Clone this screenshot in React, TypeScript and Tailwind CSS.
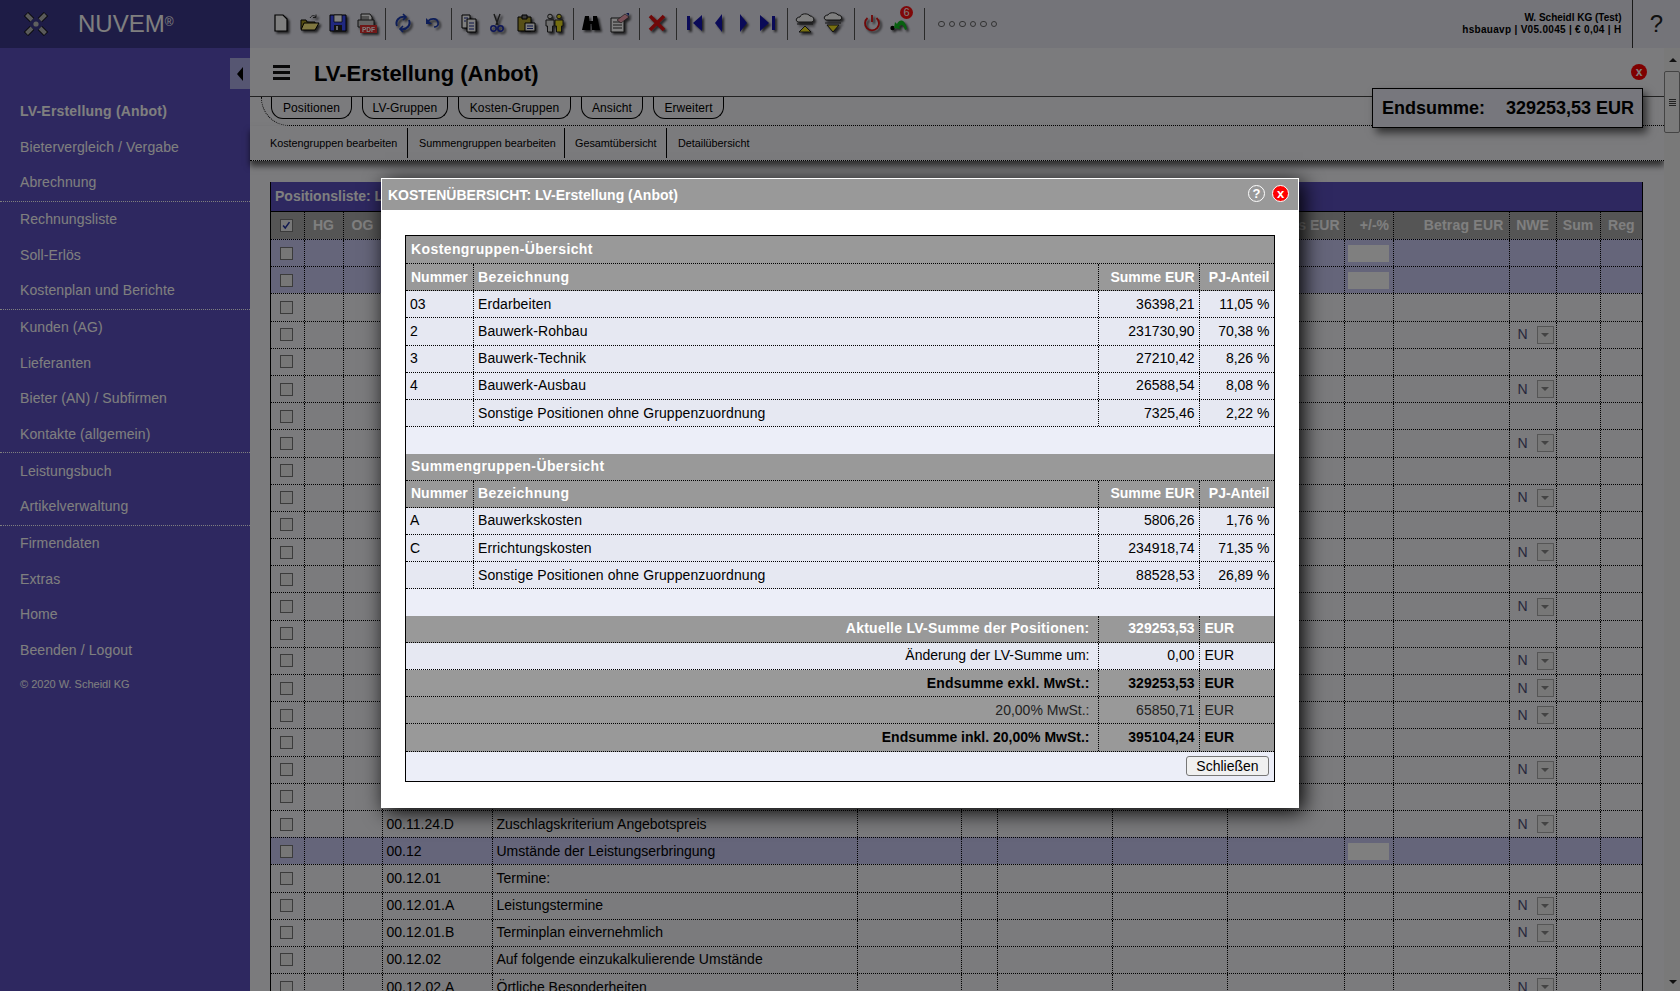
import React from 'react';

const gridCols =
  'grid-cols-[33.5px_39px_39px_110px_365px_104px_36.5px_115px_115px_116.5px_49.5px_115.5px_47px_44px_43.5px]';
const cell = 'flex h-full items-center border-r border-dotted border-black';

const menuGroups = [
  ['LV-Erstellung (Anbot)', 'Bietervergleich / Vergabe', 'Abrechnung'],
  ['Rechnungsliste', 'Soll-Erlös', 'Kostenplan und Berichte'],
  ['Kunden (AG)', 'Lieferanten', 'Bieter (AN) / Subfirmen', 'Kontakte (allgemein)'],
  ['Leistungsbuch', 'Artikelverwaltung'],
  ['Firmendaten', 'Extras', 'Home', 'Beenden / Logout'],
];

const listRows: { nr?: string; text?: string; hl?: boolean; n?: boolean }[] = [
  { hl: true }, { hl: true }, {}, { n: true }, {}, { n: true }, {}, { n: true }, {}, { n: true },
  {}, { n: true }, {}, { n: true }, {}, { n: true }, { n: true }, { n: true }, {}, { n: true }, {},
  { nr: '00.11.24.D', text: 'Zuschlagskriterium Angebotspreis', n: true },
  { nr: '00.12', text: 'Umstände der Leistungserbringung', hl: true },
  { nr: '00.12.01', text: 'Termine:' },
  { nr: '00.12.01.A', text: 'Leistungstermine', n: true },
  { nr: '00.12.01.B', text: 'Terminplan einvernehmlich', n: true },
  { nr: '00.12.02', text: 'Auf folgende einzukalkulierende Umstände' },
  { nr: '00.12.02.A', text: 'Örtliche Besonderheiten', n: true },
];

const kostenRows = [
  ['03', 'Erdarbeiten', '36398,21', '11,05 %'],
  ['2', 'Bauwerk-Rohbau', '231730,90', '70,38 %'],
  ['3', 'Bauwerk-Technik', '27210,42', '8,26 %'],
  ['4', 'Bauwerk-Ausbau', '26588,54', '8,08 %'],
  ['', 'Sonstige Positionen ohne Gruppenzuordnung', '7325,46', '2,22 %'],
];

const summenRows = [
  ['A', 'Bauwerkskosten', '5806,26', '1,76 %'],
  ['C', 'Errichtungskosten', '234918,74', '71,35 %'],
  ['', 'Sonstige Positionen ohne Gruppenzuordnung', '88528,53', '26,89 %'],
];

const Logo = () => (
  <svg width="28" height="28" viewBox="0 0 28 28">
    <g strokeLinecap="butt">
      <path d="M4 4L10 10M24 4L18 10M4 24L10 18M24 24L18 18" stroke="#111" strokeWidth="6" />
      <path d="M4.500 4.500L10 10M23.500 4.500L18 10M4.500 23.500L10 18M23.500 23.500L18 18" stroke="#b4b4b4" strokeWidth="4" />
    </g>
    <circle cx="14" cy="14" r="2.600" fill="#c0c0c0" />
  </svg>
);

const Icon = ({ children, className = 'w-[28.3px]' }: { children: React.ReactNode; className?: string }) => (
  <div className={`mb-[2px] flex shrink-0 justify-center ${className}`}>
    <svg width="22" height="22" viewBox="0 0 22 22" className="drop-shadow-[2px_2px_1px_rgba(0,0,0,0.7)]">
      {children}
    </svg>
  </div>
);

const Sep = ({ className = 'ml-[5px] mr-[3px]' }: { className?: string }) => (
  <div className={`h-[32px] w-px shrink-0 bg-[#555] ${className}`} />
);

const Toolbar = () => (
  <div className="flex h-12 shrink-0 items-center bg-[#e8e8f2] pl-[17px]">
    <Icon>
      <path d="M5 3h8l4 4v12H5z" fill="#fff" stroke="#000" strokeWidth="1.2" />
    </Icon>
    <Icon>
      <path d="M3 8h5l1 2h8v7H3z" fill="#a89a20" stroke="#000" />
      <path d="M3 18l3-7h15l-4 7z" fill="#ffef80" stroke="#000" />
      <path d="M12 6c2-3 4-3 6-1M18 2.500v3h-3" fill="none" stroke="#333" />
    </Icon>
    <Icon>
      <path d="M3 3h16v16H3z" fill="#4050ff" stroke="#000" />
      <path d="M7 3h8v7H7z" fill="#fff" stroke="#000" strokeWidth="0.7" />
      <path d="M7 13h8v6H7z" fill="#222" />
      <path d="M9 14h2v4H9z" fill="#ccc" />
    </Icon>
    <Icon>
      <path d="M6 2h9l2 3v4H6z" fill="#fff" stroke="#222" />
      <path d="M3 8h16v7H3z" fill="#c8c8c8" stroke="#222" />
      <path d="M6 5h8M6 7h8" stroke="#444" />
      <rect x="5" y="13" width="17" height="8" fill="#e03030" />
      <text x="13.500" y="19.500" fontSize="6.500" fontWeight="700" fill="#fff" textAnchor="middle" fontFamily="Liberation Sans">PDF</text>
    </Icon>
    <Sep />
    <Icon>
      <path d="M5 14c-2-5 2-10 8-9M17 8c2 5-2 10-8 9" fill="none" stroke="#1a3ab0" strokeWidth="2" />
      <path d="M11 2l3 3-3 3M11 14l-3 3 3 3" fill="none" stroke="#1a3ab0" strokeWidth="1.6" />
    </Icon>
    <Icon>
      <path d="M7 9c3-3 9-3 10 1s-2 5-4 5" fill="none" stroke="#1a3ab0" strokeWidth="1.6" />
      <path d="M5 6v6h6z" fill="#1a3ab0" />
    </Icon>
    <Sep />
    <Icon>
      <path d="M4 3h8v13H4z" fill="#fff" stroke="#000" />
      <path d="M9 7h9v13H9z" fill="#fff" stroke="#000" />
      <path d="M6 6h4M6 9h2M11 11h5M11 14h5M11 17h5" stroke="#1a2a90" />
    </Icon>
    <Icon>
      <path d="M8 2l4 11M14 2l-4 11" stroke="#333" strokeWidth="1.4" />
      <circle cx="7.500" cy="16.500" r="2.700" fill="none" stroke="#1a2ab0" strokeWidth="1.500" />
      <circle cx="14.500" cy="16.500" r="2.700" fill="none" stroke="#1a2ab0" strokeWidth="1.500" />
    </Icon>
    <Icon>
      <path d="M3 5h13v14H3z" fill="#b0a030" stroke="#000" />
      <path d="M7 3h5v4H7z" fill="#777" stroke="#000" />
      <path d="M10 11h10v8H10z" fill="#fff" stroke="#000" />
      <path d="M12 14h6M12 16.500h6" stroke="#1a2a90" />
    </Icon>
    <Icon>
      <circle cx="7" cy="4.500" r="2.300" fill="#ddd" stroke="#222" />
      <path d="M3 8h8v6H9.500v6h-5v-6H3z" fill="#ddd" stroke="#222" />
      <circle cx="16" cy="4.500" r="2.300" fill="#e8dc20" stroke="#222" />
      <path d="M12 8h8v6h-1.500v6h-5v-6H12z" fill="#e8dc20" stroke="#222" />
    </Icon>
    <Sep />
    <Icon>
      <path d="M5 4h4v5h4V4h4l3 14h-8v-6h-2v6H2z" fill="#000" />
    </Icon>
    <Icon>
      <path d="M3 6h13v14H3z" fill="#fff" stroke="#222" />
      <path d="M5 10h9M5 13h9M5 16h9" stroke="#333" />
      <path d="M9 8l8-6 4 3-8 6z" fill="#f0a0b0" stroke="#222" strokeWidth="0.6" />
      <path d="M18 1h3v3z" fill="#1a2a90" />
    </Icon>
    <Sep />
    <Icon>
      <path d="M4 4l14 14M18 4L4 18" stroke="#e01010" strokeWidth="3.600" />
    </Icon>
    <Sep className="ml-[5px] mr-[6px]" />
    <Icon className="w-[24px]">
      <path d="M3 4h3v14H3zM18 3v16l-9-8z" fill="#1414b0" />
    </Icon>
    <Icon className="w-[24px]">
      <path d="M14 2v18l-7-9z" fill="#1414b0" />
    </Icon>
    <Icon className="w-[24px]">
      <path d="M8 2v18l7-9z" fill="#1414b0" />
    </Icon>
    <Icon className="w-[24px]">
      <path d="M19 4h-3v14h3zM4 3v16l9-8z" fill="#1414b0" />
    </Icon>
    <Sep className="ml-[8px] mr-[3px]" />
    <Icon>
      <path d="M4 10c-3-1-2-5 2-5 1-4 8-4 10-1 4 0 5 5 2 6z" fill="#fff" stroke="#222" />
      <path d="M3 12h16" stroke="#222" />
      <path d="M11 14l6 6H5z" fill="#f0e020" stroke="#222" />
    </Icon>
    <Icon>
      <path d="M4 8C1 7 2 3 6 3c1-3 8-3 10 0 4 0 5 4 2 5z" fill="#fff" stroke="#222" />
      <path d="M3 11h16" stroke="#222" />
      <path d="M11 20l6-7H5z" fill="#f0e020" stroke="#222" />
    </Icon>
    <Sep className="ml-[7px] mr-[2px]" />
    <Icon>
      <path d="M11 3v7" stroke="#e01010" strokeWidth="1.800" />
      <path d="M6.500 6a7 7 0 1 0 9 0" fill="none" stroke="#e01010" strokeWidth="1.800" />
    </Icon>
    <div className="relative shrink-0">
      <Icon>
        <circle cx="3.500" cy="16" r="2.200" fill="#000" />
        <path d="M8 12c2-5 8-6 10 5l-2 1c-2-6-4-6-6-3l2 2-7-1 1-6z" fill="#10c020" />
      </Icon>
      <div className="absolute right-[1px] top-[-6px] flex h-[13px] w-[13px] items-center justify-center rounded-full bg-[#ff1010] text-[11px] leading-none text-white">
        6
      </div>
    </div>
    <Sep className="ml-[10px] mr-[13px]" />
    <div className="flex gap-[4px]">
      {[0, 1, 2, 3, 4, 5].map((i) => (
        <div key={i} className="h-[6.500px] w-[6.500px] rounded-full border border-[#666]" />
      ))}
    </div>
    <div className="ml-auto mr-[10.500px] text-right text-[10px] font-bold leading-[12.500px] text-black">
      <div>W. Scheidl KG (Test)</div>
      <div className="tracking-[0.3px]">hsbauavp | V05.0045 | € 0,04 | H</div>
    </div>
    <div className="flex h-full w-[48px] items-center justify-center border-l border-[#333] text-[24px] text-[#222]">?</div>
  </div>
);

const Sidebar = () => (
  <div className="flex w-[250px] shrink-0 flex-col bg-[#5c50c0]">
    <div className="flex h-12 shrink-0 items-center bg-[#3c388c] pl-[22px]">
      <Logo />
      <span className="ml-[28px] text-[24px] leading-none text-white">
        NUVEM<sup className="text-[12px]">®</sup>
      </span>
    </div>
    <div className="mt-[10px] flex h-[31px] w-[20px] items-center justify-center self-end bg-[#acace4]">
      <div className="h-0 w-0 border-y-[7px] border-r-[6px] border-y-transparent border-r-black" />
    </div>
    <div className="mt-[4.500px]">
      {menuGroups.map((group, g) => (
        <div key={g} className={g < 4 ? 'border-b border-dotted border-white' : ''}>
          {group.map((item) => (
            <div
              key={item}
              className={`flex h-[35.700px] items-center pl-[20px] text-[14px] text-white ${item.startsWith('LV-') ? 'font-bold tracking-[0.2px]' : 'tracking-[0.1px]'}`}
            >
              {item}
            </div>
          ))}
        </div>
      ))}
    </div>
    <div className="mt-[7.500px] pl-[20px] text-[11px] text-white">© 2020 W. Scheidl KG</div>
  </div>
);

const Checkbox = ({ checked }: { checked?: boolean }) => (
  <div className="relative ml-[9px] h-[13px] w-[13px] border border-[#777] bg-[#eee]">
    {checked && (
      <svg viewBox="0 0 13 13" className="absolute inset-0">
        <path d="M2.500 6.500l2.500 3 5-7" fill="none" stroke="#2030a0" strokeWidth="1.800" />
      </svg>
    )}
  </div>
);

const ListHeader = () => (
  <div className={`grid h-[28px] ${gridCols} border-t border-black bg-[#aaa] text-[14px] font-bold text-white`}>
    <div className={cell}><Checkbox checked /></div>
    <div className={`${cell} justify-center`}>HG</div>
    <div className={`${cell} justify-center`}>OG</div>
    <div className={cell} />
    <div className={cell} />
    <div className={cell} />
    <div className={cell} />
    <div className={cell} />
    <div className={cell} />
    <div className={`${cell} justify-end pr-[4px]`}>Preis EUR</div>
    <div className={`${cell} justify-end pr-[4px]`}>+/-%</div>
    <div className={`${cell} justify-end pr-[5px] tracking-[0.2px]`}>Betrag EUR</div>
    <div className={`${cell} justify-center`}>NWE</div>
    <div className={`${cell} justify-center`}>Sum</div>
    <div className="flex h-full items-center justify-center pr-[2px]">Reg</div>
  </div>
);

const ListRow = ({ nr, text, hl, n }: { nr?: string; text?: string; hl?: boolean; n?: boolean }) => (
  <div className={`grid h-[27.200px] shrink-0 ${gridCols} border-t border-dotted border-black text-[14px] text-black ${hl ? 'bg-[#cacaf4]' : ''}`}>
    <div className={cell}><Checkbox /></div>
    <div className={cell} />
    <div className={cell} />
    <div className={`${cell} pl-[4px]`}>{nr}</div>
    <div className={`${cell} pl-[4px]`}>{text}</div>
    <div className={cell} />
    <div className={cell} />
    <div className={cell} />
    <div className={cell} />
    <div className={cell} />
    <div className={`${cell} justify-center`}>{hl && <div className="h-[17px] w-[41px] bg-white" />}</div>
    <div className={cell} />
    <div className={`${cell} pl-[8px] text-[#505078]`}>
      {n && (
        <>
          <span className="w-[19px]">N</span>
          <div className="flex h-[18px] w-[17px] items-center justify-center border border-[#aaa] bg-[#eee]">
            <div className="h-0 w-0 border-x-[4px] border-t-[4px] border-x-transparent border-t-[#888]" />
          </div>
        </>
      )}
    </div>
    <div className={cell} />
    <div />
  </div>
);

const Scrollbar = () => (
  <div className="relative w-[16px] shrink-0 bg-[#f2f2f2]">
    <div className="absolute left-[5px] top-[10px] h-0 w-0 border-x-[4px] border-b-[4px] border-x-transparent border-b-[#222]" />
    <div className="absolute inset-x-0 top-[23px] flex h-[62px] flex-col items-center justify-center gap-[1px] rounded-[2px] border border-[#888] bg-[#f4f4f4]">
      <div className="h-px w-[7px] bg-[#444]" />
      <div className="h-px w-[7px] bg-[#444]" />
      <div className="h-px w-[7px] bg-[#444]" />
      <div className="h-px w-[7px] bg-[#444]" />
    </div>
    <div className="absolute bottom-[7px] left-[5px] h-0 w-0 border-x-[4px] border-t-[4px] border-x-transparent border-t-[#222]" />
  </div>
);

const tabs = [
  ['Positionen', 'w-[81px]'],
  ['LV-Gruppen', 'w-[86px]'],
  ['Kosten-Gruppen', 'w-[113px]'],
  ['Ansicht', 'w-[62px]'],
  ['Erweitert', 'w-[71px]'],
];

const subTabs = [
  ['Kostengruppen bearbeiten', 'w-[138px] border-r'],
  ['Summengruppen bearbeiten', 'w-[157px] pl-[11px] border-r'],
  ['Gesamtübersicht', 'w-[102px] pl-[10px] border-r'],
  ['Detailübersicht', 'pl-[11px]'],
];

const MainArea = () => (
  <div className="relative flex min-w-0 flex-1 flex-col bg-[#f6f6fa]">
    <div className="flex h-[49px] shrink-0 items-center border-b border-[#444]">
      <div className="ml-[23px] flex w-[17px] flex-col gap-[3px]">
        <div className="h-[3px] bg-[#111]" />
        <div className="h-[3px] bg-[#111]" />
        <div className="h-[3px] bg-[#111]" />
      </div>
      <h1 className="ml-[24px] mt-[3px] text-[22px] font-bold leading-none text-black">LV-Erstellung (Anbot)</h1>
      <div className="ml-auto mr-[17px] flex h-[16px] w-[16px] items-center justify-center rounded-full bg-[#f00] text-[12px] font-bold leading-none text-white">
        x
      </div>
    </div>
    <div className="ml-[11px] flex h-[29px] shrink-0 gap-[10px] rounded-bl-[28px] border-b border-l border-dotted border-black pl-[9px]">
      {tabs.map(([label, w]) => (
        <div key={label} className={`flex h-[22px] items-center justify-center rounded-b-[12px] border border-t-0 border-black text-[12px] tracking-[0.1px] text-black ${w}`}>
          {label}
        </div>
      ))}
    </div>
    <div className="relative flex h-[35px] shrink-0 items-center border-b border-dotted border-black bg-[#f6f6fa] pl-[20px] shadow-[0_5px_6px_rgba(0,0,0,0.6)]">
      {subTabs.map(([label, cls]) => (
        <div key={label} className={`flex h-[30px] items-center border-black text-[10.800px] text-black ${cls}`}>
          {label}
        </div>
      ))}
    </div>
    <div className="absolute left-[1122px] top-[40px] flex h-[40px] w-[271px] items-center border border-black bg-[#eeeefa] pl-[9px] text-[18px] font-bold text-black shadow-[4px_5px_8px_rgba(0,0,0,0.6)]">
      <span className="w-[124px]">Endsumme:</span>
      <span>329253,53 EUR</span>
    </div>
    <div className="ml-[20px] mt-[21px] w-[1373px] shrink-0 border-x border-black">
      <div className="flex h-[29px] items-center bg-[#5c50c0] pl-[4px] text-[14px] font-bold text-white">Positionsliste: LV</div>
      <ListHeader />
      {listRows.map((r, i) => (
        <ListRow key={i} {...r} />
      ))}
    </div>
  </div>
);

const modalCols = 'grid-cols-[67.500px_625px_101.500px_1fr]';
const mCell = 'flex h-full items-center border-r border-dotted border-black';

const SectionTitle = ({ title, className = 'h-[27.200px]' }: { title: string; className?: string }) => (
  <div className={`flex items-center border-b border-dotted border-black bg-[#999] pl-[5px] text-[14px] font-bold tracking-[0.4px] text-white ${className}`}>
    {title}
  </div>
);

const HeadRow = () => (
  <div className={`grid h-[27.200px] ${modalCols} border-b border-dotted border-black bg-[#999] text-[14px] font-bold text-white`}>
    <div className={`${mCell} pl-[5px]`}>Nummer</div>
    <div className={`${mCell} pl-[4.500px] tracking-[0.4px]`}>Bezeichnung</div>
    <div className={`${mCell} justify-end pr-[4.500px]`}>Summe EUR</div>
    <div className="flex h-full items-center justify-end pr-[4.500px]">PJ-Anteil</div>
  </div>
);

const DataRow = ({ row }: { row: string[] }) => (
  <div className={`grid h-[27.200px] ${modalCols} border-b border-dotted border-black bg-[#e6e8f2] text-[14px] text-black`}>
    <div className={`${mCell} pl-[4px]`}>{row[0]}</div>
    <div className={`${mCell} pl-[4.500px] tracking-[0.1px]`}>{row[1]}</div>
    <div className={`${mCell} justify-end pr-[4.500px]`}>{row[2]}</div>
    <div className="flex h-full items-center justify-end pr-[4.500px]">{row[3]}</div>
  </div>
);

const TotalRow = ({ label, value, className, labelClass = '' }: { label: string; value: string; className: string; labelClass?: string }) => (
  <div className={`grid h-[27.200px] grid-cols-[692.500px_101.500px_1fr] border-b border-dotted border-black text-[14px] ${className}`}>
    <div className={`${mCell} justify-end pr-[8px] ${labelClass}`}>{label}</div>
    <div className={`${mCell} justify-end pr-[4.500px]`}>{value}</div>
    <div className="flex h-full items-center pl-[4.500px]">EUR</div>
  </div>
);

const CostModal = () => (
  <div className="absolute left-[381px] top-[178px] w-[918px] border border-white bg-white shadow-[4px_4px_20px_#000]">
    <div className="flex h-[31px] items-center bg-[#999] pl-[6px] pr-[9px] text-[14px] font-bold text-white">
      <span className="pt-[2px]">KOSTENÜBERSICHT: LV-Erstellung (Anbot)</span>
      <div className="ml-auto mb-[2px] flex h-[17px] w-[17px] items-center justify-center rounded-full border border-white text-[13px] leading-none">?</div>
      <div className="mb-[2px] ml-[7px] flex h-[17px] w-[17px] items-center justify-center rounded-full border border-white bg-[#f00] text-[13px] leading-none">x</div>
    </div>
    <div className="px-[23px] pb-[25px] pt-[25px]">
      <div className="border border-black bg-[#eceef8]">
        <SectionTitle title="Kostengruppen-Übersicht" className="h-[28px]" />
        <HeadRow />
        {kostenRows.map((r, i) => (
          <DataRow key={i} row={r} />
        ))}
        <div className="h-[26.400px]" />
        <SectionTitle title="Summengruppen-Übersicht" />
        <HeadRow />
        {summenRows.map((r, i) => (
          <DataRow key={i} row={r} />
        ))}
        <div className="h-[26.200px]" />
        <TotalRow label="Aktuelle LV-Summe der Positionen:" value="329253,53" className="bg-[#999] font-bold text-white" labelClass="tracking-[0.25px]" />
        <TotalRow label="Änderung der LV-Summe um:" value="0,00" className="bg-[#e6e8f2] text-black" />
        <TotalRow label="Endsumme exkl. MwSt.:" value="329253,53" className="bg-[#999] font-bold text-black" labelClass="tracking-[0.15px]" />
        <TotalRow label="20,00% MwSt.:" value="65850,71" className="bg-[#999] text-[#222]" />
        <TotalRow label="Endsumme inkl. 20,00% MwSt.:" value="395104,24" className="bg-[#999] font-bold text-black" />
        <div className="flex h-[29px] items-center justify-end pr-[5px]">
          <button className="flex h-[20px] w-[83px] items-center justify-center rounded-[3px] border border-[#777] bg-[#f0f0f0] text-[14px] text-black">
            Schließen
          </button>
        </div>
      </div>
    </div>
  </div>
);

export default function App() {
  return (
    <div className="relative flex h-[991px] w-[1680px] overflow-hidden font-['Liberation_Sans',Arial,sans-serif]">
      <Sidebar />
      <div className="flex min-w-0 flex-1 flex-col">
        <Toolbar />
        <div className="flex min-h-0 flex-1">
          <MainArea />
          <Scrollbar />
        </div>
      </div>
      <div className="absolute inset-0 bg-black/50" />
      <CostModal />
    </div>
  );
}
